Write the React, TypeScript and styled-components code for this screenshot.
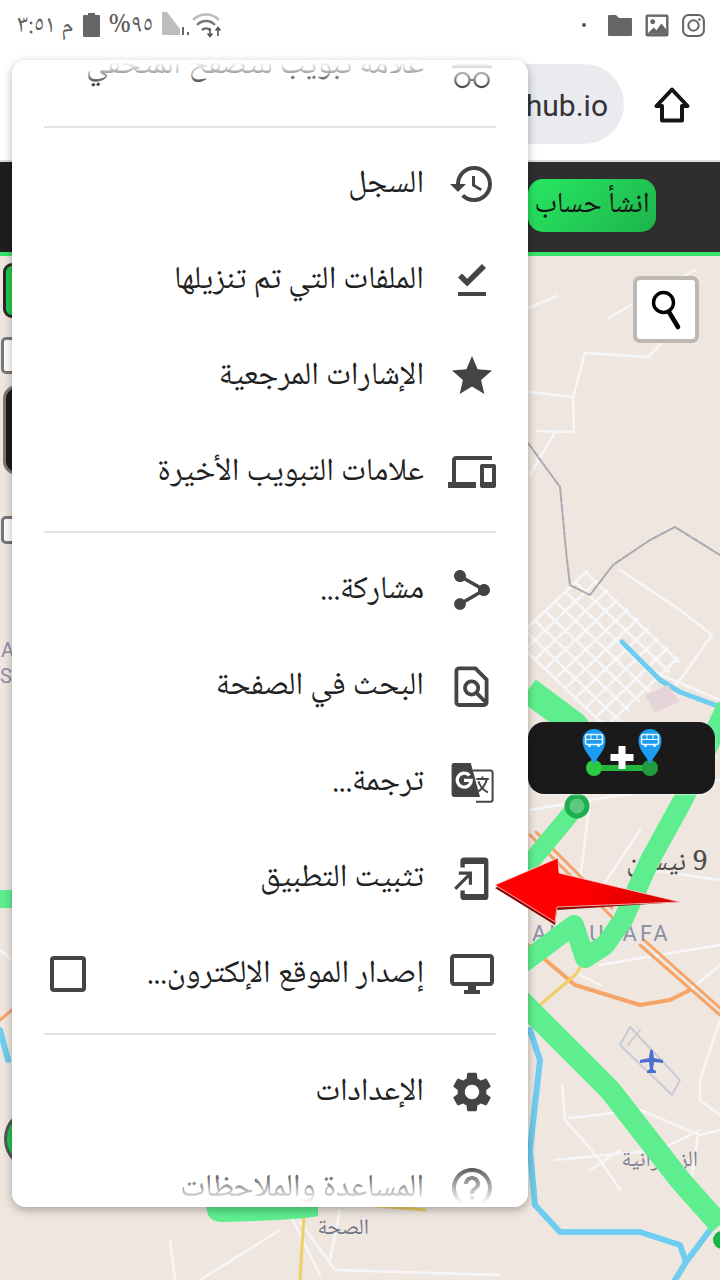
import React from "react";
import styled, { createGlobalStyle } from "styled-components";

const ICON = "#444444";
const AR = `"Noto Naskh Arabic", "Noto Sans Arabic", "Droid Arabic Naskh", "DejaVu Sans", sans-serif`;

const Global = createGlobalStyle`
  * { box-sizing: border-box; }
  html, body { margin: 0; padding: 0; width: 720px; height: 1280px; overflow: hidden; background: #fff; }
  #root { width: 720px; height: 1280px; }
`;

const Page = styled.div`
  position: relative;
  width: 720px;
  height: 1280px;
  display: flex;
  flex-direction: column;
  overflow: hidden;
  font-family: ${AR};
`;

const StatusBar = styled.div`
  height: 55px;
  display: flex;
  align-items: center;
  justify-content: space-between;
  padding: 0 15px 5px 17px;
  background: #fff;
  color: #666;
`;
const StatusGroup = styled.div`
  display: flex;
  align-items: center;
  gap: 9px;
`;
const StatusText = styled.span`
  font-size: 25px;
  line-height: 28px;
  margin-top: 3px;
  white-space: nowrap;
  color: #5f5f5f;
`;

const Toolbar = styled.div`
  height: 107px;
  background: #fff;
  display: flex;
  justify-content: flex-end;
  align-items: flex-start;
  padding: 9px 30px 0 0;
  gap: 30px;
  border-bottom: 2px solid #dcdcdc;
`;
const UrlPill = styled.div`
  width: 300px;
  height: 80px;
  border-radius: 0 40px 40px 0;
  background: #e9ebef;
  display: flex;
  align-items: center;
  justify-content: flex-end;
  padding: 2px 16px 0 0;
  font: 30px Roboto, sans-serif;
  color: #333;
`;
const HomeIcon = styled.svg`
  width: 36px;
  height: 36px;
  margin-top: 23px;
`;

const AppHeader = styled.div`
  height: 94px;
  background: linear-gradient(90deg, #1e1e1e, #2e2e2e 60%);
  border-bottom: 4px solid #37e26c;
  display: flex;
  align-items: flex-start;
  padding: 17px 0 0 528px;
`;
const SignUp = styled.div`
  width: 128px;
  height: 53px;
  border-radius: 15px;
  background: linear-gradient(135deg, #28e862, #1db44b);
  color: #151515;
  font-size: 29px;
  font-weight: 300;
  display: flex;
  align-items: center;
  justify-content: center;
  white-space: nowrap;
  overflow: hidden;
`;

const MapArea = styled.div`
  position: relative;
  flex: 1;
  background: #efe7df;
  overflow: hidden;
`;
const MapCanvas = styled.svg`
  display: block;
  width: 720px;
  height: 1024px;
`;

const SearchBtn = styled.div`
  position: absolute;
  left: 633px;
  top: 20px;
  width: 66px;
  height: 67px;
  border: 4px solid #bdb8b2;
  border-radius: 7px;
  background: #fff;
  display: flex;
  align-items: center;
  justify-content: center;
`;
const BusBtn = styled.div`
  position: absolute;
  left: 528px;
  top: 466px;
  width: 187px;
  height: 72px;
  background: #1a1a1a;
  border-radius: 16px;
  box-shadow: 0 1px 2px rgba(255, 255, 255, 0.6);
  display: flex;
  align-items: center;
  justify-content: center;
`;
const EdgeBtn = styled.div<{ $top: number; $h: number; $bg: string; $bd: string; $r: number }>`
  position: absolute;
  left: ${(p) => (p.$bg === "#fff" ? 1 : 3)}px;
  top: ${(p) => p.$top}px;
  width: 60px;
  height: ${(p) => p.$h}px;
  background: ${(p) => p.$bg};
  border: 3px solid ${(p) => p.$bd};
  border-radius: ${(p) => p.$r}px;
`;
const EdgeCircle = styled.div`
  position: absolute;
  left: 4px;
  top: 852px;
  width: 62px;
  height: 62px;
  background: #22c24f;
  border: 3px solid #555;
  border-radius: 50%;
`;

const Menu = styled.div`
  position: absolute;
  left: 12px;
  top: 60px;
  width: 516px;
  height: 1147px;
  background: #fff;
  border-radius: 14px;
  box-shadow: 0 3px 10px rgba(0, 0, 0, 0.3);
  overflow: hidden;
`;
const MenuScroll = styled.div`
  margin-top: -43px;
  direction: rtl;
`;
const Row = styled.div`
  height: 96px;
  display: flex;
  align-items: center;
  padding: 0 32px 0 38px;
  gap: 24px;
`;
const RowIcon = styled.svg`
  width: 48px;
  height: 48px;
  flex: none;
  fill: ${ICON};
`;
const RowLabel = styled.span`
  font-size: 32px;
  line-height: 44px;
  margin-top: 1px;
  color: #212121;
  white-space: nowrap;
`;
const Divider = styled.div<{ $before: number; $after: number }>`
  height: 2px;
  margin: ${(p) => p.$before}px 32px ${(p) => p.$after}px 32px;
  background: #e3e3e3;
`;
const Check = styled.span`
  width: 36px;
  height: 36px;
  border: 4px solid ${ICON};
  border-radius: 4px;
  margin-right: auto;
`;
const Fade = styled.div<{ $bottom?: boolean }>`
  position: absolute;
  left: 0;
  right: 0;
  height: ${(p) => (p.$bottom ? 44 : 28)}px;
  ${(p) => (p.$bottom ? "bottom: 0;" : "top: 0;")}
  background: linear-gradient(${(p) => (p.$bottom ? "to top" : "to bottom")}, #fff 8%, rgba(255, 255, 255, 0));
`;

const Arrow = styled.svg`
  position: absolute;
  left: 490px;
  top: 852px;
  width: 196px;
  height: 76px;
`;

const MapLabel = styled.text<{ $c?: string; $s?: number; $latin?: boolean }>`
  font-family: ${(p) => (p.$latin ? "Roboto, sans-serif" : AR)};
  font-size: ${(p) => p.$s ?? 20}px;
  fill: ${(p) => p.$c ?? "#4a4a4a"};
`;

const P: React.FC<{ d: string; flip?: boolean }> = ({ d, flip }) => (
  <RowIcon viewBox="0 0 24 24">
    <path d={d} transform={flip ? "matrix(-1 0 0 1 24 0)" : undefined} />
  </RowIcon>
);

const Incognito = () => (
  <RowIcon viewBox="0 0 24 24">
    <path d="M5 10h14l1 2H4z" opacity="0.5" />
    <rect x="2" y="12" width="20" height="1.5" />
    <circle cx="7.2" cy="19.5" r="3.6" fill="none" stroke={ICON} strokeWidth="1.1" />
    <circle cx="16.8" cy="19.5" r="3.6" fill="none" stroke={ICON} strokeWidth="1.1" />
    <path d="M10.6 19.5h2.8" stroke={ICON} strokeWidth="1" />
  </RowIcon>
);
const FindPage = () => (
  <RowIcon viewBox="0 0 24 24">
    <path d="M5.5 3.2h8.2l5.6 5.6v11.4a1.3 1.3 0 0 1-1.3 1.3H5.5a1.3 1.3 0 0 1-1.3-1.3V4.5a1.3 1.3 0 0 1 1.3-1.3z" fill="none" stroke={ICON} strokeWidth="1.9" strokeLinejoin="round" />
    <circle cx="11.8" cy="13" r="3.3" fill="none" stroke={ICON} strokeWidth="1.9" />
    <path d="M14.2 15.4l4.6 4.6" stroke={ICON} strokeWidth="1.9" />
  </RowIcon>
);
const Translate = () => (
  <RowIcon viewBox="0 0 24 24">
    <path d="M3 2.5h8.4l4.6 17H3a1.2 1.2 0 0 1-1.2-1.2V3.7A1.2 1.2 0 0 1 3 2.5z" />
    <path d="M10.8 8.8a3.5 3.5 0 1 0 .8 2.4H8" fill="none" stroke="#fff" strokeWidth="1.6" />
    <path d="M12.4 6.2h8.8a1.1 1.1 0 0 1 1.1 1.1v13.5a1.1 1.1 0 0 1-1.1 1.1h-7.2" fill="none" stroke={ICON} strokeWidth="1" />
    <path d="M14.2 10.5h6.2M17.2 9.2v1.3M19.4 10.5c-.6 3-2.8 5.6-5 6.6M15.2 11.6c.8 2.4 2.6 4.6 4.8 5.6" fill="none" stroke={ICON} strokeWidth="1" />
  </RowIcon>
);
const InstallApp = () => (
  <RowIcon viewBox="0 0 24 24">
    <path d="M8 1.8h10.4a1.8 1.8 0 0 1 1.8 1.8v17.6a1.8 1.8 0 0 1-1.8 1.8H8a1.8 1.8 0 0 1-1.8-1.8v-3h2.2V20h9.6V5H8.4v1.8H6.2V3.6A1.8 1.8 0 0 1 8 1.8z" />
    <path d="M3.6 17.4l7.2-7.2M5.4 9.6h5.8v5.8" fill="none" stroke={ICON} strokeWidth="1.6" />
  </RowIcon>
);

const paths = {
  history: "M13 3a9 9 0 0 0-9 9H1l3.89 3.89.07.14L9 12H6c0-3.87 3.13-7 7-7s7 3.13 7 7-3.13 7-7 7c-1.93 0-3.68-.79-4.94-2.06l-1.42 1.42A8.954 8.954 0 0 0 13 21a9 9 0 0 0 0-18zm-1 5v5l4.28 2.54.72-1.21-3.5-2.08V8H12z",
  done: "M5 18h14v2H5v-2zm4.6-2.7L5 10.7l2-1.9 2.6 2.6L17 4l2 2-9.4 9.3z",
  star: "M12 17.27L18.18 21l-1.64-7.03L22 9.24l-7.19-.61L12 2 9.19 8.63 2 9.24l5.46 4.73L5.82 21z",
  devices: "M4 6h18V4H4c-1.1 0-2 .9-2 2v11H0v3h14v-3H4V6zm19 2h-6c-.55 0-1 .45-1 1v10c0 .55.45 1 1 1h6c.55 0 1-.45 1-1V9c0-.55-.45-1-1-1zm-1 9h-4v-7h4v7z",
  share: "M18 16.08c-.76 0-1.44.3-1.96.77L8.91 12.7c.05-.23.09-.46.09-.7s-.04-.47-.09-.7l7.05-4.11c.54.5 1.25.81 2.04.81 1.66 0 3-1.34 3-3s-1.34-3-3-3-3 1.34-3 3c0 .24.04.47.09.7L8.04 9.81C7.5 9.31 6.79 9 6 9c-1.66 0-3 1.34-3 3s1.34 3 3 3c.79 0 1.5-.31 2.04-.81l7.12 4.16c-.05.21-.08.43-.08.65 0 1.61 1.31 2.92 2.92 2.92s2.92-1.31 2.92-2.92-1.31-2.92-2.92-2.92z",
  desktop: "M21 2H3c-1.1 0-2 .9-2 2v12c0 1.1.9 2 2 2h7v2H8v2h8v-2h-2v-2h7c1.1 0 2-.9 2-2V4c0-1.1-.9-2-2-2zm0 14H3V4h18v12z",
  gear: "M19.14 12.94c.04-.3.06-.61.06-.94 0-.32-.02-.64-.07-.94l2.03-1.58c.18-.14.23-.41.12-.61l-1.92-3.32c-.12-.22-.37-.29-.59-.22l-2.39.96c-.5-.38-1.03-.7-1.62-.94l-.36-2.54c-.04-.24-.24-.41-.48-.41h-3.84c-.24 0-.43.17-.47.41l-.36 2.54c-.59.24-1.13.57-1.62.94l-2.39-.96c-.22-.08-.47 0-.59.22L2.74 8.87c-.12.21-.08.47.12.61l2.03 1.58c-.05.3-.09.63-.09.94s.02.64.07.94l-2.03 1.58c-.18.14-.23.41-.12.61l1.92 3.32c.12.22.37.29.59.22l2.39-.96c.5.38 1.03.7 1.62.94l.36 2.54c.05.24.24.41.48.41h3.84c.24 0 .44-.17.47-.41l.36-2.54c.59-.24 1.13-.56 1.62-.94l2.39.96c.22.08.47 0 .59-.22l1.92-3.32c.12-.22.07-.47-.12-.61l-2.01-1.58zM12 15.6c-1.98 0-3.6-1.62-3.6-3.6s1.62-3.6 3.6-3.6 3.6 1.62 3.6 3.6-1.62 3.6-3.6 3.6z",
  help: "M11 18h2v-2h-2v2zm1-16C6.48 2 2 6.48 2 12s4.48 10 10 10 10-4.48 10-10S17.52 2 12 2zm0 18c-4.41 0-8-3.59-8-8s3.59-8 8-8 8 3.59 8 8-3.59 8-8 8zm0-14c-2.21 0-4 1.79-4 4h2c0-1.1.9-2 2-2s2 .9 2 2c0 2-3 1.75-3 5h2c0-2.25 3-2.5 3-5 0-2.21-1.79-4-4-4z",
};

const Pin: React.FC<{ x: number }> = ({ x }) => (
  <g transform={`translate(${x} 0)`}>
    <path d="M0 36C-3 27-11.5 22-11.5 11.5A11.5 11.5 0 0 1 11.5 11.5C11.5 22 3 27 0 36z" fill="#1c9cf2" />
    <rect x="-8.5" y="5.5" width="17" height="10" rx="2" fill="none" stroke="#eef8ff" strokeWidth="1.5" />
    <path d="M-8.5 10.5H8.5M-3 5.5v5M3 5.5v5" stroke="#eef8ff" strokeWidth="1" />
    <path d="M-6 17h3M3 17h3" stroke="#eef8ff" strokeWidth="1.5" />
  </g>
);

const grid: string[] = [];
{
  const O = [515, 640];
  const u = [0.72, -0.69];
  const v = [0.72, 0.69];
  const L1 = 100;
  const L2 = 130;
  for (let t = 0; t <= L2; t += 14) {
    const sx = O[0] + v[0] * t;
    const sy = O[1] + v[1] * t;
    grid.push(`M${sx} ${sy}L${sx + u[0] * L1} ${sy + u[1] * L1}`);
  }
  for (let t = 0; t <= L1; t += 14) {
    const sx = O[0] + u[0] * t;
    const sy = O[1] + u[1] * t;
    grid.push(`M${sx} ${sy}L${sx + v[0] * L2} ${sy + v[1] * L2}`);
  }
}

const thinRoads = [
  "M528 308L557 296", "M608 318L640 300L695 270", "M585 353L648 357L665 340", "M585 353L573 397L574 432L537 431",
  "M530 392L573 397", "M555 432L530 475", "M620 570L680 610L712 635L680 680L672 690", "M650 670L720 700",
  "M530 810L590 800L720 780", "M590 800L580 880L620 900", "M640 830L600 890", "M650 870L720 880",
  "M600 965L720 945", "M580 975L600 985", "M690 990L720 965", "M720 1020L700 1080L700 1100L720 1115",
  "M562 1085L565 1120L600 1160L620 1190", "M570 1118L640 1110L700 1135L720 1130", "M555 1160L660 1150L700 1130",
  "M590 1170L620 1150", "M698 1135L690 1190", "M0 950L12 960",
  "M300 1222L335 1270L500 1275", "M200 1280L280 1230", "M288 1210L320 1275", "M340 1210L330 1260", "M170 1240L175 1280",
];

export default function App() {
  return (
    <Page>
      <Global />
      <StatusBar>
        <StatusGroup dir="ltr">
          <StatusText>م ٣:٥١</StatusText>
          <svg width="17" height="24" viewBox="0 0 17 24"><path d="M5 0h7v2h4a1 1 0 0 1 1 1v20a1 1 0 0 1-1 1H1a1 1 0 0 1-1-1V3a1 1 0 0 1 1-1h4z" fill="#666" /></svg>
          <StatusText>%٩٥</StatusText>
          <svg width="62" height="26" viewBox="0 0 62 26">
            <path d="M0 0l5 0 13 17v6H0z" fill="#bdbdbd" />
            <path d="M20 15h2v8h-2zM25 20h2v3h-2z" fill="#666" />
            <path d="M31 8a18 18 0 0 1 26 0" fill="none" stroke="#bbb" strokeWidth="2.4" />
            <path d="M35 13a12 12 0 0 1 18 0" fill="none" stroke="#777" strokeWidth="2.4" />
            <path d="M40 18a6 6 0 0 1 8 0" fill="none" stroke="#666" strokeWidth="2.4" />
            <path d="M48 16v8M45.6 21.5l2.4 3 2.4-3M56 24v-8M53.6 18.5l2.4-3 2.4 3" fill="none" stroke="#555" strokeWidth="1.6" />
          </svg>
        </StatusGroup>
        <StatusGroup>
          <svg width="6" height="6" viewBox="0 0 6 6" style={{ marginRight: 12 }}><circle cx="3" cy="3" r="2" fill="#555" /></svg>
          <svg width="24" height="21" viewBox="0 0 24 21"><path d="M0 1a1 1 0 0 1 1-1h7l3 3h12a1 1 0 0 1 1 1v16a1 1 0 0 1-1 1H1a1 1 0 0 1-1-1z" fill="#666" /></svg>
          <svg width="24" height="23" viewBox="0 0 25 24" style={{ marginLeft: 4 }}>
            <rect x="0.5" y="0.5" width="24" height="23" rx="2" fill="#666" />
            <rect x="3" y="3" width="19" height="17" fill="#fff" />
            <circle cx="8" cy="8" r="2.6" fill="#666" />
            <path d="M3 20l6-6 3 3 5-7 5 6v4z" fill="#666" />
          </svg>
          <svg width="23" height="23" viewBox="0 0 25 25" style={{ marginLeft: 4 }}>
            <rect x="1.2" y="1.2" width="22.6" height="22.6" rx="6" fill="none" stroke="#666" strokeWidth="2.2" />
            <circle cx="12.5" cy="12.5" r="5.6" fill="none" stroke="#666" strokeWidth="2.2" />
            <circle cx="19" cy="6" r="1.5" fill="#666" />
          </svg>
        </StatusGroup>
      </StatusBar>

      <Toolbar>
        <UrlPill>hub.io</UrlPill>
        <HomeIcon viewBox="0 0 36 36">
          <path d="M18 2.5L2.5 19H8v14.5h20V19h5.500z" fill="none" stroke="#151515" strokeWidth="4" strokeLinejoin="round" />
        </HomeIcon>
      </Toolbar>

      <AppHeader>
        <SignUp dir="rtl">انشأ حساب</SignUp>
      </AppHeader>

      <MapArea>
        <MapCanvas viewBox="0 256 720 1024">
          <g fill="none" strokeLinejoin="round" strokeLinecap="round">
            <path d={thinRoads.join("")} stroke="#f6f6f8" strokeWidth="2.5" />
            <path d={grid.join("")} stroke="#f7f7f9" strokeWidth="2.6" />
            <path d="M528 443L560 487L565 540L567 560L570 585L590 595L613 565L650 540L675 527L720 555" stroke="#a9a9b2" strokeWidth="2" strokeDasharray="7 2" />
            <path d="M622 642L660 680L680 692L720 707" stroke="#6fcdf0" strokeWidth="5" />
            <path d="M645 695L668 685L680 702L655 712z" fill="#e5d5d8" stroke="none" />
            <path d="M530 1030L540 1060L530 1150L535 1205L560 1232L640 1232L680 1245L686 1262L675 1280M686 1262L710 1230M0 1030L8 1060" stroke="#6fcdf0" strokeWidth="6" />
            <path d="M528 945L575 985L640 1005L670 1000L690 990" stroke="#f6a468" strokeWidth="4" />
            <path d="M640 945L720 1015M644 940L720 1008" stroke="#f6a468" strokeWidth="3" />
            <path d="M530 835L612 917M536 832L612 908" stroke="#f3a26a" strokeWidth="3" />
            <path d="M540 1005L575 975L582 965" stroke="#f0cf62" strokeWidth="3" />
            <path d="M425 1210L305 1200L300 1280" stroke="#f0cf62" strokeWidth="3" />
            <path d="M0 1020L12 1010" stroke="#f6a468" strokeWidth="3" />
            <path d="M630 1027L680 1080L672 1095L620 1045zM628 1045L640 1030" stroke="#c8cbd4" strokeWidth="2" />
          </g>
          <MapLabel x="708" y="870" $s={28} direction="rtl">9 نيسان</MapLabel>
          <MapLabel x="532" y="941" $s={22} $c="#8b90a8" letterSpacing="3" $latin>AL RUSAFA</MapLabel>
          <MapLabel x="698" y="1166" $s={22} $c="#7a7f95" direction="rtl">الزعفرانية</MapLabel>
          <MapLabel x="369" y="1234" $s={22} $c="#6f7485" direction="rtl">الصحة</MapLabel>
          <MapLabel x="1" y="657" $s={20} $c="#8b90a8" $latin>A</MapLabel>
          <MapLabel x="0" y="683" $s={20} $c="#8b90a8" $latin>S</MapLabel>
          <g fill="none" strokeLinejoin="round" strokeLinecap="round">
            <path d="M528 690L575 725L590 745" stroke="#5fee8f" strokeWidth="26" strokeLinecap="butt" />
            <path d="M577 806L524 870" stroke="#5fee8f" strokeWidth="18" />
            <path d="M725 710L683 800L650 860L623 920L605 945L585 958L574 925L520 965" stroke="#5fee8f" strokeWidth="20" />
            <path d="M520 1000L610 1090L680 1180L720 1225" stroke="#5fee8f" strokeWidth="22" strokeLinecap="butt" />
            <path d="M0 899H14" stroke="#5fee8f" strokeWidth="18" strokeLinecap="butt" />
            <path d="M205 1200H318V1216Q300 1220 222 1222Q208 1222 207 1210z" fill="#5fee8f" stroke="none" />
            <circle cx="577" cy="806" r="10" fill="#5cc97f" stroke="#1fae4f" strokeWidth="5" />
            <circle cx="722" cy="1240" r="9" fill="#18b548" stroke="none" />
            <path d="M640 1060l9-2 1-7q1-3 3 0l1 7 9 2v3l-9-1-1 7 3 2v2h-9v-2l3-2-1-7-9 1z" fill="#4a6fd0" stroke="none" />
          </g>
        </MapCanvas>

        <SearchBtn>
          <svg width="38" height="42" viewBox="0 0 38 42">
            <circle cx="16.500" cy="13.500" r="10" fill="none" stroke="#000" strokeWidth="3.4" />
            <path d="M22 23l9 15" stroke="#000" strokeWidth="4.6" strokeLinecap="round" />
          </svg>
        </SearchBtn>
        <BusBtn>
          <svg width="92" height="58" viewBox="0 0 92 58">
            <path d="M18 39H74" stroke="#22b83f" strokeWidth="6" />
            <circle cx="18" cy="39" r="8" fill="#2acb42" />
            <circle cx="74" cy="39" r="8" fill="#1f9d3a" />
            <path d="M42.500 17h7v8h8v7h-8v8h-7v-8h-8v-7h8z" fill="#fff" />
            <Pin x={18} />
            <Pin x={74} />
          </svg>
        </BusBtn>
        <EdgeBtn $top={7} $h={55} $bg="#22c84f" $bd="#2a2a2a" $r={9} />
        <EdgeBtn $top={81} $h={37} $bg="#fff" $bd="#777" $r={5} />
        <EdgeBtn $top={129} $h={90} $bg="#1a1a1a" $bd="#7b7672" $r={14} />
        <EdgeBtn $top={260} $h={28} $bg="#fff" $bd="#777" $r={5} />
        <EdgeCircle />
      </MapArea>

      <Menu>
        <MenuScroll>
          <Row><Incognito /><RowLabel>علامة تبويب للتصفح المتخفي</RowLabel></Row>
          <Divider $before={13} $after={8} />
          <Row><P d={paths.history} /><RowLabel>السجل</RowLabel></Row>
          <Row><P d={paths.done} /><RowLabel>الملفات التي تم تنزيلها</RowLabel></Row>
          <Row><P d={paths.star} /><RowLabel>الإشارات المرجعية</RowLabel></Row>
          <Row><P d={paths.devices} /><RowLabel>علامات التبويب الأخيرة</RowLabel></Row>
          <Divider $before={11} $after={9} />
          <Row><P d={paths.share} flip /><RowLabel>مشاركة...</RowLabel></Row>
          <Row><FindPage /><RowLabel>البحث في الصفحة</RowLabel></Row>
          <Row><Translate /><RowLabel>ترجمة...</RowLabel></Row>
          <Row><InstallApp /><RowLabel>تثبيت التطبيق</RowLabel></Row>
          <Row><P d={paths.desktop} /><RowLabel>إصدار الموقع الإلكترون...</RowLabel><Check /></Row>
          <Divider $before={11} $after={9} />
          <Row><P d={paths.gear} /><RowLabel>الإعدادات</RowLabel></Row>
          <Row><P d={paths.help} /><RowLabel>المساعدة والملاحظات</RowLabel></Row>
        </MenuScroll>
        <Fade />
        <Fade $bottom />
      </Menu>

      <Arrow viewBox="490 852 196 76">
        <defs>
          <linearGradient id="arrowFill" x1="0" x2="1">
            <stop offset="0.45" stopColor="#ff0000" />
            <stop offset="1" stopColor="#d20000" />
          </linearGradient>
        </defs>
        <path d="M495 888L558 861L559 876L680 902L557 910L555 925z" fill="#8f0000" />
        <path d="M495 885L558 858L559 873L680 902L557 907L555 922z" fill="url(#arrowFill)" stroke="#ffd6d6" strokeWidth="0.8" />
      </Arrow>
    </Page>
  );
}
